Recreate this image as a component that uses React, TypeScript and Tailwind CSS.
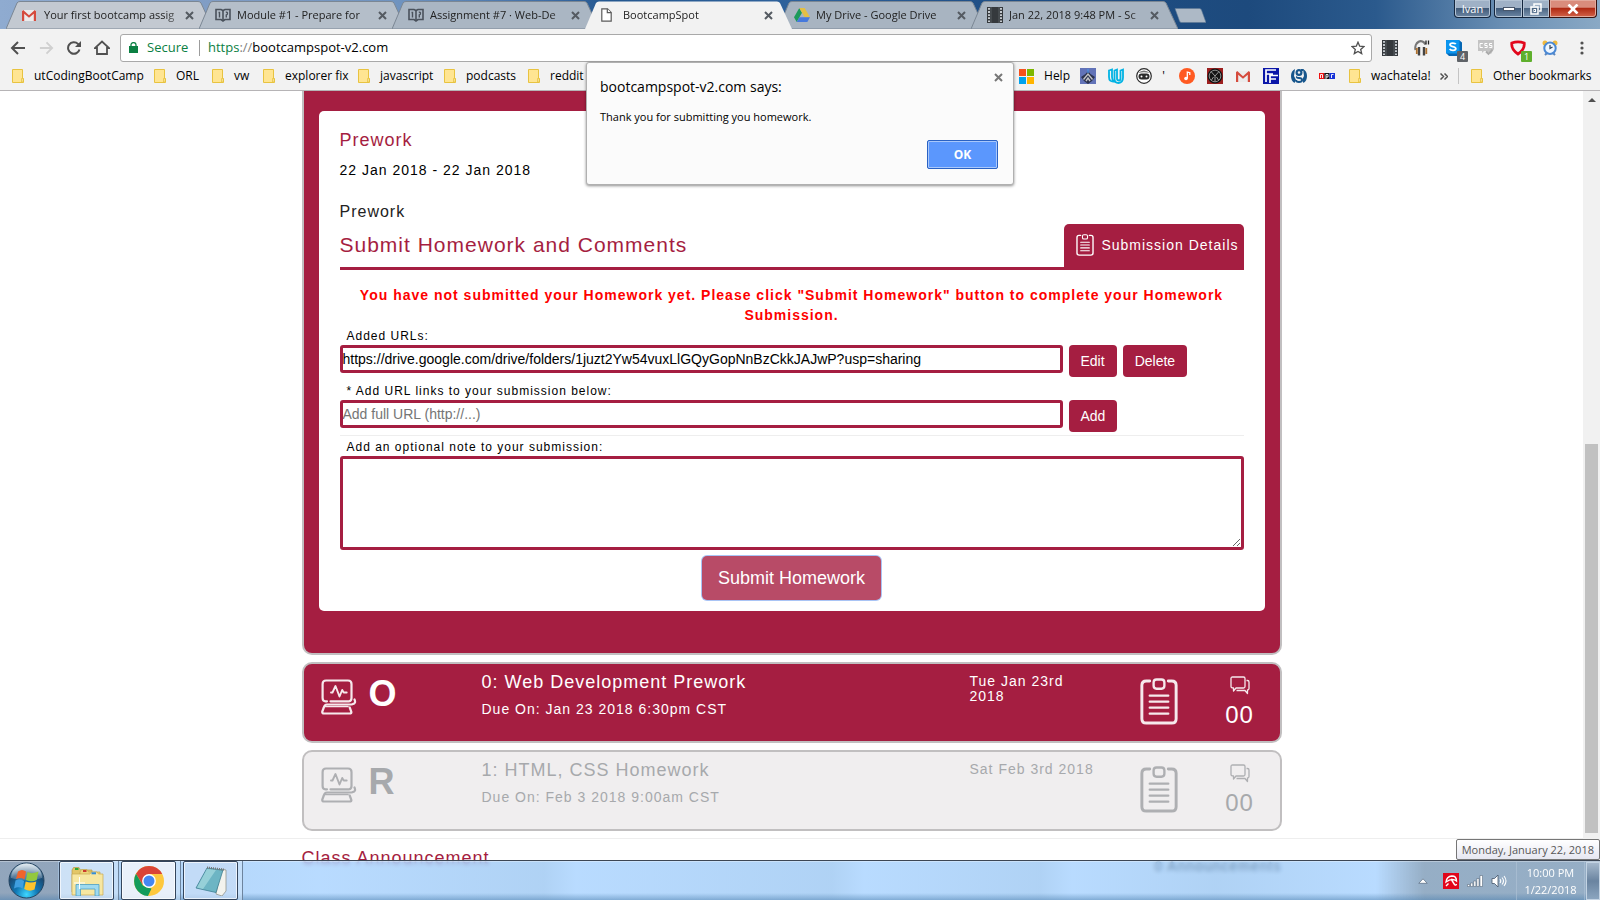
import React from "react";

/* ---------- browser icons ---------- */

function Gmail({ className }: { className: string }) {
  return (
    <svg className={className} viewBox="0 0 14 11" aria-hidden="true">
      <rect x="0" y="0" width="14" height="11" rx="1" fill="#ececec" />
      <path d="M0 11V1.2L1.2 0 7 5.2 12.8 0 14 1.2V11h-2.2V3.8L7 7.8 2.2 3.8V11z" fill="#d54b3d" />
    </svg>
  );
}

function Book({ className }: { className: string }) {
  return (
    <svg className={className} viewBox="0 0 16 14" fill="none" stroke="#4a525c" strokeWidth="1.6" aria-hidden="true">
      <path d="M1 1.5h5l2 1 2-1h5v10h-5l-2 1.500-2-1.500H1z" />
      <path d="M8 2.5V13" />
      <path d="M3.500 4.500h1v5" strokeWidth="1.400" />
      <path d="M11.300 9.500V7q1.500-.5 1.200-2-.3-1-1.700-.8" strokeWidth="1.400" />
    </svg>
  );
}

function PageIcon({ className }: { className: string }) {
  return (
    <svg className={className} viewBox="0 0 11 14" fill="#fff" stroke="#5a5a5a" strokeWidth="1.2" aria-hidden="true">
      <path d="M.8.8h5.700l3.700 3.700v8.700H.8z" />
      <path d="M6.300.8v3.900h3.900" />
    </svg>
  );
}

function DriveIcon({ className }: { className: string }) {
  return (
    <svg className={className} viewBox="0 0 16 14" aria-hidden="true">
      <path d="M5.300 0 0 9.200 2.700 14 8 4.700z" fill="#1c9a5b" />
      <path d="M5.300 0h5.400L16 9.200h-5.300z" fill="#e3bf45" />
      <path d="M5.400 9.200H16L13.300 14H2.700z" fill="#4679dc" />
    </svg>
  );
}

function Film({ className }: { className: string }) {
  return (
    <svg className={className} viewBox="0 0 16 16" aria-hidden="true">
      <rect width="16" height="16" fill="#35393d" />
      <path d="M2 1v14M14 1v14" stroke="#c4c9ce" strokeWidth="2" strokeDasharray="1.800 1.300" />
      <path d="M4 0v16M12 0v16" stroke="#6d7379" strokeWidth=".6" />
    </svg>
  );
}

function Cross({ className }: { className: string }) {
  return (
    <svg className={className} viewBox="0 0 9 9" stroke="currentColor" strokeWidth="2" aria-hidden="true">
      <path d="M1 1l7 7M8 1L1 8" />
    </svg>
  );
}

function Folder() {
  return (
    <svg className="h-[14px] w-3 shrink-0" viewBox="0 0 12 14" aria-hidden="true">
      <path d="M.5.5h10v9h1v4H.5z" fill="#ffe592" stroke="#e8c340" />
      <path d="M9.500 13V9.500h1.500V13z" fill="#fff2c4" stroke="#e8c340" strokeWidth=".8" />
    </svg>
  );
}

/* ---------- tabs ---------- */

const tabs = [
  { title: "Your first bootcamp assig", icon: <Gmail className="h-[11px] w-[14px]" />, fill: "#c3c9d1" },
  { title: "Module #1 - Prepare for", icon: <Book className="h-[14px] w-4" />, fill: "#b4bec9" },
  { title: "Assignment #7 · Web-De", icon: <Book className="h-[14px] w-4" />, fill: "#aab6c3" },
  { title: "BootcampSpot", icon: <PageIcon className="h-[14px] w-[11px]" />, fill: "#f2f2f2", active: true },
  { title: "My Drive - Google Drive", icon: <DriveIcon className="h-[14px] w-4" />, fill: "#a8b4c1" },
  { title: "Jan 22, 2018 9:48 PM - Sc", icon: <Film className="size-4" />, fill: "#a8b4c1" },
];

function TabStrip() {
  return (
    <header className="relative flex h-[29px] shrink-0 items-end overflow-hidden bg-[linear-gradient(90deg,#8fabd0_0%,#7f9cc4_14%,#6f93bf_25%,#3f6ea6_34%,#24578f_38%,#2f629c_50%,#1f4f86_62%,#1d4a7d_78%,#2b5a8d_86%,#6a8fb4_94%,#8aa9c5_100%)] pl-[6px]">
      {tabs.map((t) => (
        <div
          key={t.title}
          className={
            t.active
              ? "relative z-10 -mr-[14px] flex h-7 w-[207px] shrink-0 items-center pr-[19px] pl-4"
              : "relative -mr-[14px] flex h-7 w-[207px] shrink-0 items-center pr-[19px] pl-4"
          }
        >
          <svg className="absolute inset-0 h-full w-full" viewBox="0 0 207 28" preserveAspectRatio="none" aria-hidden="true">
            <path d="M0 28 L11 2 Q12 .5 14 .5 H192 Q194 .5 195 2 L207 28 z" fill={t.fill} stroke={t.active ? "none" : "#7b8794"} />
          </svg>
          <span className="relative flex w-[22px] shrink-0 justify-start">{t.icon}</span>
          <button className="relative min-w-0 flex-1 text-left text-[11px] leading-4 whitespace-nowrap text-[#222] [mask-image:linear-gradient(90deg,#000_88%,#0005)]">
            {t.title}
          </button>
          <button aria-label={"Close " + t.title} className="relative ml-1 text-[#555b62]">
            <Cross className="size-[9px]" />
          </button>
        </div>
      ))}
      <button aria-label="New tab" className="mb-[6px] ml-[10px] self-end">
        <svg className="h-[15px] w-8" viewBox="0 0 32 15" aria-hidden="true">
          <path d="M1 .5h24.500q1.500 0 2 1.500L32 14.500H7.500q-1.500 0-2-1.500z" fill="#adb9c6" stroke="#5e7896" strokeWidth=".6" />
        </svg>
      </button>
      <div className="ml-auto flex h-[19px] self-start pr-[3px] text-white">
        <button className="mr-[3px] h-[18px] w-[37px] rounded-b-[4px] border border-t-0 border-[#14263e] bg-[linear-gradient(#9fb1c6_0_45%,#415a78_50%,#6c86a3)] text-[11px] leading-4 shadow-[inset_0_0_0_1px_#b3c3d4]">
          Ivan
        </button>
        <button aria-label="Minimize" className="flex h-[18px] w-[29px] items-center justify-center rounded-bl-[4px] border border-t-0 border-[#14263e] bg-[linear-gradient(#9fb1c6_0_45%,#3f5a7a_50%,#6c86a3)] shadow-[inset_0_0_0_1px_#b3c3d4]">
          <svg className="h-1 w-3" viewBox="0 0 12 4"><rect x=".5" y=".5" width="11" height="3" fill="#fff" stroke="#475569" /></svg>
        </button>
        <button aria-label="Restore" className="flex h-[18px] w-[26px] items-center justify-center border-b border-[#14263e] bg-[linear-gradient(#9fb1c6_0_45%,#4d6784_50%,#7c95b0)] shadow-[inset_0_0_0_1px_#b3c3d4]">
          <svg className="size-3" viewBox="0 0 12 12" fill="none" stroke="#fff" strokeWidth="1.500"><path d="M4 3V1h7v7H9" /><rect x="1" y="4" width="7" height="7" /><rect x="4" y="6.500" width="1.500" height="2" strokeWidth="1" /></svg>
        </button>
        <button aria-label="Close window" className="flex h-[18px] w-[48px] items-center justify-center rounded-br-[4px] border border-t-0 border-[#3a1310] bg-[linear-gradient(#d98c7c_0_42%,#b02a14_50%,#d2634a)] shadow-[inset_0_0_0_1px_#e2a99c]">
          <svg className="h-[10px] w-3" viewBox="0 0 12 10" fill="none" stroke="#fff" strokeWidth="2.600"><path d="M1.500.5l9 9M10.500.5l-9 9" /></svg>
        </button>
      </div>
    </header>
  );
}

/* ---------- toolbar ---------- */

function Toolbar() {
  return (
    <div className="flex h-[33px] shrink-0 items-center bg-[#f2f2f2] pt-1 pr-[10px] pl-[10px]">
      <nav className="flex w-[110px] items-center gap-[13px] text-[#505050]">
        <button aria-label="Back">
          <svg className="h-[14px] w-4" viewBox="0 0 16 14" fill="none" stroke="currentColor" strokeWidth="2"><path d="M15 7H2M8 1L2 7l6 6" /></svg>
        </button>
        <button aria-label="Forward" className="text-[#d0d0d0]">
          <svg className="h-[14px] w-[15px]" viewBox="0 0 16 14" fill="none" stroke="currentColor" strokeWidth="2"><path d="M1 7h13M8 1l6 6-6 6" /></svg>
        </button>
        <button aria-label="Reload">
          <svg className="size-[14px]" viewBox="0 0 14 14" fill="none" stroke="currentColor" strokeWidth="2"><path d="M12.500 8.500A5.800 5.800 0 1 1 11 2.900L12.500 4.500" /><path d="M14 0v6H8z" fill="currentColor" stroke="none" /></svg>
        </button>
        <button aria-label="Home">
          <svg className="h-[15px] w-4" viewBox="0 0 16 15" fill="none" stroke="currentColor" strokeWidth="1.800"><path d="M3 14V8H1l7-6.500L15 8h-2v6z" /></svg>
        </button>
      </nav>
      <div className="flex h-7 min-w-0 flex-1 items-center rounded-[3px] border border-[#a9a9a9] bg-white pr-[6px] pl-2">
        <svg className="mr-[9px] h-[11px] w-[9px]" viewBox="0 0 9 11" aria-hidden="true"><path d="M0 4h9v7H0z" fill="#0b8043" /><path d="M2 4.500V2.800a2.500 2.200 0 0 1 5 0v1.700" fill="none" stroke="#0b8043" strokeWidth="1.300" /></svg>
        <span className="w-[52px] text-[13px] text-[#0b8043]">Secure</span>
        <span className="mr-2 h-4 w-px bg-[#9c9c9c]" />
        <a href="https://bootcampspot-v2.com" className="text-[13px] text-black">
          <span className="text-[#0b8043]">https</span>
          <span className="text-[#808080]">://</span>bootcampspot-v2.com
        </a>
        <button aria-label="Bookmark this page" className="ml-auto">
          <svg className="size-[14px]" viewBox="0 0 14 14" fill="none" stroke="#505050" strokeWidth="1.300"><path d="M7 1.200l1.700 4 4.300.4-3.300 2.800 1 4.200L7 10.400l-3.700 2.200 1-4.200L1 5.600l4.300-.4z" /></svg>
        </button>
      </div>
      <div className="flex items-center gap-4 pl-[10px]">
        <Film className="size-4" />
        <svg className="size-4" viewBox="0 0 16 16" fill="none" aria-label="Headphones">
          <path d="M1.500 10a5.500 7 0 0 1 10-5.500" stroke="#777" strokeWidth="2.200" />
          <path d="M5 7v8.500M10 7v8.500" stroke="#444" strokeWidth="2.400" />
          <path d="M2.800 8v6M12.300 8v6" stroke="#b0722f" strokeWidth="1.800" />
          <path d="M12 .5v4M14.500.5v4" stroke="#222" strokeWidth="1.300" />
        </svg>
        <span className="relative">
          <svg className="size-4" viewBox="0 0 16 16" aria-hidden="true"><path d="M0 0h13l3 2.500V16H3l-3-3z" fill="#0567b4" /><rect width="13.500" height="13.500" rx="1" fill="#0a95ef" /><path d="M9.800 4.200C9 2.700 4 2.500 4 4.800c0 2.200 5.800 1.300 5.800 3.700 0 2.500-5.200 2.200-6.100.4" fill="none" stroke="#fff" strokeWidth="1.800" /></svg>
          <span className="absolute top-[11px] left-[11px] h-[11px] w-[11px] rounded-[1px] bg-[#5f6368] text-center text-[9px] leading-[11px] text-white">4</span>
        </span>
        <svg className="size-4" viewBox="0 0 16 16" aria-hidden="true">
          <path d="M0 0h16v9l-3 5-4-2-1-1H6l-2 2V11H0z" fill="#c3c3c3" />
          <path d="M4.800 3.500H2v4h2.800M9.300 3.500H6.800v2h2.400v2H6.600M14 3.500h-2.500v2h2.400v2h-2.600" fill="none" stroke="#fff" />
          <path d="M8 11.500l2.500 2.500 4-4.500" fill="none" stroke="#aaa" strokeWidth="1.800" />
        </svg>
        <span className="relative">
          <svg className="size-4" viewBox="0 0 16 16" fill="none" aria-hidden="true"><path d="M1.800 3Q8 .8 14.200 3 15 9.500 8 14 1 9.500 1.800 3z" stroke="#e2071c" strokeWidth="2.800" /></svg>
          <span className="absolute top-[11px] left-[11px] h-[11px] w-[11px] rounded-[1px] bg-[#5fb02d] text-center text-[9px] leading-[11px] text-white">1</span>
        </span>
        <svg className="size-4" viewBox="0 0 16 16" fill="none" aria-label="Alarm clock">
          <circle cx="3" cy="3" r="2.500" fill="#efb93e" /><circle cx="13" cy="3" r="2.500" fill="#efb93e" />
          <path d="M3 15l2-2M13 15l-2-2" stroke="#5b86bd" strokeWidth="2" />
          <circle cx="8" cy="8.300" r="5.700" fill="#eef6ff" stroke="#4b89d4" strokeWidth="2" />
          <path d="M8 5v3.500l2.500-1.500" stroke="#345" strokeWidth="1.200" />
        </svg>
        <button aria-label="Menu" className="w-4">
          <svg className="mx-auto h-[14px] w-1" viewBox="0 0 4 14" fill="#505050"><circle cx="2" cy="2" r="1.600" /><circle cx="2" cy="7" r="1.600" /><circle cx="2" cy="12" r="1.600" /></svg>
        </button>
      </div>
    </div>
  );
}

/* ---------- bookmarks ---------- */

const folders = [
  { label: "utCodingBootCamp", width: "w-[142px]" },
  { label: "ORL", width: "w-[58px]" },
  { label: "vw", width: "w-[51px]" },
  { label: "explorer fix", width: "w-[95px]" },
  { label: "javascript", width: "w-[86px]" },
  { label: "podcasts", width: "w-[84px]" },
];

function Bookmarks() {
  return (
    <nav className="flex h-[29px] shrink-0 items-center border-b border-[#b6b4b6] bg-[#f2f2f2] pr-3 pl-3 text-[12px] leading-4 whitespace-nowrap text-black">
      {folders.map((f) => (
        <button key={f.label} className={`${f.width} flex shrink-0 items-center gap-[10px] text-left`}>
          <Folder />
          {f.label}
        </button>
      ))}
      <button className="flex min-w-0 flex-1 items-center gap-[10px] overflow-hidden text-left">
        <Folder />
        reddit b
      </button>
      <div className="flex items-center gap-3">
        <a href="#help" className="-mr-[2px] flex items-center gap-[10px]">
          <svg className="size-[15px]" viewBox="0 0 15 15" aria-hidden="true"><path d="M0 0h7v7H0z" fill="#f6511d" /><path d="M8 0h7v7H8z" fill="#7db700" /><path d="M0 8h7v7H0z" fill="#00a2ed" /><path d="M8 8h7v7H8z" fill="#ffb400" /></svg>
          Help
        </a>
        <svg className="size-4" viewBox="0 0 16 16" aria-hidden="true"><rect width="16" height="16" fill="#6273b8" /><path d="M8 3l2.500 3L15 9l-3 4-4 3-4-3-3-4 4.500-3z" fill="#2c3450" /><path d="M3.500 11.500L8 6l4.500 5.500M6 13l2-3 2 3" fill="none" stroke="#c3c3c6" strokeWidth="1.400" /><path d="M7.300 1h1.400v4H7.300z" fill="#4a8fe0" /></svg>
        <svg className="size-4" viewBox="0 0 16 16" fill="none" stroke="#02b3e4" strokeWidth="1.800" aria-hidden="true"><path d="M1 2.500l3-1v7.500q0 3 2 4.500Q1 14 1 9z" /><path d="M6.500 2.500l2.500-1v9q0 2 2 2 1.500 0 1.500-2V2.500l2.500-1v8q0 5-4.500 5.500-4 0-4-4z" /></svg>
        <svg className="size-4" viewBox="0 0 16 16" aria-hidden="true"><circle cx="8" cy="8" r="7.300" fill="#fff" stroke="#2c2c2c" strokeWidth="1.200" /><path d="M2 5q6-5 12 0-6-1.500-12 0z" fill="#777" /><rect x="2.500" y="5.500" width="11" height="6" rx="3" fill="#2c2c2c" /><circle cx="5.500" cy="8.500" r="1" fill="#fff" /><circle cx="10.500" cy="8.500" r="1" fill="#fff" /></svg>
        <span className="-mx-1 w-[7px] text-center">'</span>
        <svg className="ml-1 size-4" viewBox="0 0 16 16" aria-hidden="true"><circle cx="8" cy="8" r="8" fill="#ff5a22" /><circle cx="7" cy="10.500" r="1.800" fill="#fff" /><path d="M8.300 10.500V4l2.500.7V7" fill="none" stroke="#fff" strokeWidth="1.300" /></svg>
        <svg className="size-4" viewBox="0 0 16 16" aria-hidden="true"><rect width="16" height="16" fill="#9d1f1f" /><circle cx="8" cy="8" r="7.500" fill="#141414" /><circle cx="8" cy="8" r="5.800" fill="none" stroke="#888" /><path d="M4 3.500l4 4.500 4-4.500M8 8v5.500M4.500 12l2-3M11.500 12l-2-3" fill="none" stroke="#999" /></svg>
        <span className="flex w-4 justify-center"><Gmail className="h-[11px] w-[14px]" /></span>
        <svg className="size-4" viewBox="0 0 16 16" aria-hidden="true"><rect width="16" height="16" fill="#0b16a8" /><path d="M3 14V2h10M3 6h7M7 15V7.500h8M7 11h6" fill="none" stroke="#fff" strokeWidth="1.700" /></svg>
        <svg className="size-4" viewBox="0 0 16 16" aria-hidden="true"><path d="M4 1Q0 3 0 8t3.500 7L5 12 3 8zM12 1q4 2 4 7t-3.500 7L11 12l2-4z" fill="#17568c" /><circle cx="8" cy="4.500" r="2.400" fill="none" stroke="#17568c" strokeWidth="2.200" /><path d="M10 2h2.500M6 8.500q-1 1.500 2 1.500t3 2-3 2-3-2" fill="none" stroke="#17568c" strokeWidth="1.800" /></svg>
        <svg className="h-[6px] w-4" viewBox="0 0 16 6" aria-hidden="true"><path d="M0 0h5.300v6H0z" fill="#e11" /><path d="M5.300 0h5.300v6H5.300z" fill="#111" /><path d="M10.600 0H16v6h-5.400z" fill="#1732d8" /><path d="M1.500 5V1.500h2V5M7 6V1.500h2V4H7M12.500 5V1.500h2" fill="none" stroke="#fff" strokeWidth=".9" /></svg>
      </div>
      <button className="ml-[14px] flex w-[91px] items-center gap-[10px] text-left"><Folder />wachatela!</button>
      <button aria-label="More bookmarks" className="w-[18px]">
        <svg className="h-[7px] w-2" viewBox="0 0 8 7" fill="none" stroke="#505050" strokeWidth="1.500"><path d="M.5.5l3 3-3 3M4.500.5l3 3-3 3" /></svg>
      </button>
      <span className="mr-3 h-4 w-px bg-[#c4c4c4]" />
      <button className="flex w-[117px] items-center gap-[10px] text-left"><Folder />Other bookmarks</button>
    </nav>
  );
}

function AlertDialog() {
  return (
    <div role="alertdialog" aria-labelledby="alert-title" className="absolute top-[62px] left-1/2 z-30 -ml-[214px] flex h-[123px] w-[428px] flex-col rounded-[3px] border border-[#b0b0b0] bg-[#fbfbfb] pt-3 pr-[15px] pl-[13px] text-black shadow-[0_1px_3px_rgba(0,0,0,0.45)]">
      <div className="flex items-start justify-between">
        <h2 id="alert-title" className="text-[14px] leading-6">bootcampspot-v2.com says:</h2>
        <button aria-label="Close" className="-mt-1 -mr-[7px] p-[2px] text-[#777]"><Cross className="size-[9px]" /></button>
      </div>
      <p className="mt-[10px] text-[11px] leading-4">Thank you for submitting you homework.</p>
      <button className="mt-[15px] h-[29px] w-[71px] self-end rounded-[2px] border border-[#2a62c4] bg-[#5b97fd] text-[12px] leading-4 font-bold text-white shadow-[inset_0_0_0_1px_#a9c8fb]">OK</button>
    </div>
  );
}

/* ---------- page icons ---------- */

function Clipboard({ className }: { className: string }) {
  return (
    <svg className={className} viewBox="0 0 38 48" fill="none" stroke="currentColor" strokeLinecap="round" aria-hidden="true">
      <path d="M9.500 3H6Q1.500 3 1.500 7.500v34Q1.500 46 6 46h26q4.500 0 4.500-4.500v-34Q36.500 3 32 3h-3.500" strokeWidth="3" />
      <rect x="13.500" y="1.500" width="11" height="9.500" rx="3" strokeWidth="2.400" />
      <path d="M9.500 18h19M9.500 24.200h19M9.500 30.300h19M9.500 36.500h19" strokeWidth="2.300" />
    </svg>
  );
}

function Laptop() {
  return (
    <svg className="h-9 w-9 shrink-0 opacity-90" viewBox="0 0 36 36" fill="none" stroke="currentColor" strokeWidth="2.200" strokeLinecap="round" strokeLinejoin="round" aria-hidden="true">
      <path d="M6 22.300H4.500Q1.600 22.300 1.600 19V5Q1.600 1.500 5 1.500h22Q30.500 1.500 30.500 5v14q0 3-2.500 3.300H9.500" />
      <path d="M10 13.500h1.500L14.500 7l4 10.500 2.700-6.500 1.500 2.500h3" strokeWidth="1.900" />
      <path d="M33.500 20.500q1.800 4-2 4.700-1 .3-3 .3H6Q3.500 25.500 2.800 28.500L1.300 32.500q-.4 2 1.700 2h25.500q2.500 0 1.700-2l-1.500-4" />
      <path d="M4 27.500h23" strokeWidth="1.600" />
    </svg>
  );
}

function Chat() {
  return (
    <svg className="h-[19px] w-5 opacity-90" viewBox="0 0 20 19" fill="none" stroke="currentColor" strokeWidth="1.300" strokeLinejoin="round" aria-hidden="true">
      <path d="M2.500 1h11Q15 1 15 2.500v8q0 1.500-1.500 1.500H6l-2.500 3V12Q1 12 1 10.500v-8Q1 1 2.500 1z" />
      <path d="M16.500 4.500h1q1.500 0 1.500 1.500v6.500q0 1.500-1.500 1.500v3.500L15 14.500H6.500" />
    </svg>
  );
}

function HomeworkRow({ open, letter, title, due, date }: { open?: boolean; letter: string; title: string; due: string; date: string }) {
  return (
    <article
      className={
        open
          ? "mt-[7px] flex h-[81px] rounded-[10px] border-2 border-[#c1bfc0] bg-[#a51e41] pl-[17px] text-white"
          : "mt-[7px] flex h-[81px] rounded-[10px] border-2 border-[#c1bfc0] bg-[#f0eeef] pl-[17px] text-[#a7a9ac]"
      }
    >
      <div className="flex w-[161px] shrink-0 items-start gap-3 pt-[10px]">
        <span className="pt-[5px]"><Laptop /></span>
        <span className="text-[36px] leading-[40px] font-bold">{letter}</span>
      </div>
      <div className="min-w-0 flex-1 pt-[6px]">
        <h3 className="text-[18px] leading-6">{title}</h3>
        <p className="mt-[5px] text-[14px] leading-5">{due}</p>
      </div>
      <p className="w-[130px] shrink-0 pt-[10px] text-[14px] leading-[15px]">{date}</p>
      <div className="flex w-[118px] shrink-0 justify-center pt-[14px] opacity-90"><Clipboard className="h-[47px] w-[38px]" /></div>
      <div className="flex w-[62px] shrink-0 flex-col items-start pt-3">
        <span className="flex w-11 flex-col items-center">
          <Chat />
          <span className="mt-2 text-[24px] leading-[24px]">00</span>
        </span>
      </div>
    </article>
  );
}

const field = "h-7 w-[723px] rounded-[3px] border-3 border-[#a51e41] bg-white text-[14px] text-black outline-none placeholder:text-[#757575]";
const smallButton = "h-8 rounded-[4px] bg-[#a51e41] px-3 text-[14px] leading-5 text-white";
const fieldLabel = "block pt-[2px] pl-[7px] text-[12px] leading-[18px] tracking-[1px] text-black";

function HomeworkForm() {
  return (
    <section className="rounded-b-[10px] border-x-2 border-b-2 border-[#c1bfc0] bg-[#a51e41] px-[15px] pt-5 pb-[42px]">
      <div className="rounded-[5px] bg-white px-[21px] pt-[19px] pb-[11px]">
        <h2 className="text-[18px] leading-5 tracking-[1px] text-[#a51e41]">Prework</h2>
        <p className="mt-[10px] text-[14px] leading-5 tracking-[1px] text-black">22 Jan 2018 - 22 Jan 2018</p>
        <p className="mt-[22px] text-[16px] leading-5 tracking-[1px] text-[#222]">Prework</p>
        <div className="mt-[2px] flex h-[46px] justify-between border-b-3 border-[#a51e41]">
          <h1 className="pt-[9px] text-[21px] leading-6 tracking-[1px] text-[#a51e41]">Submit Homework and Comments</h1>
          <button className="flex items-center gap-[7px] rounded-t-[5px] bg-[#a51e41] pr-[5px] pb-[2px] pl-3 text-[14px] leading-5 tracking-[1px] text-white">
            <Clipboard className="h-[22px] w-[18px]" />
            Submission Details
          </button>
        </div>
        <p className="mt-[15px] text-center text-[14px] leading-5 font-bold tracking-[1px] text-[#f00]">
          You have not submitted your Homework yet. Please click "Submit Homework" button to complete your Homework Submission.
        </p>
        <label htmlFor="added-url" className={fieldLabel}>Added URLs:</label>
        <div className="flex gap-[6px]">
          <input id="added-url" className={field} defaultValue="https://drive.google.com/drive/folders/1juzt2Yw54vuxLlGQyGopNnBzCkkJAJwP?usp=sharing" />
          <button className={smallButton}>Edit</button>
          <button className={smallButton}>Delete</button>
        </div>
        <label htmlFor="new-url" className={"mt-[3px] " + fieldLabel}>* Add URL links to your submission below:</label>
        <div className="flex gap-[6px]">
          <input id="new-url" className={field} placeholder="Add full URL (http://...)" />
          <button className={smallButton}>Add</button>
        </div>
        <hr className="mt-[3px] border-[#eee]" />
        <label htmlFor="note" className={fieldLabel}>Add an optional note to your submission:</label>
        <textarea id="note" className="block h-[94px] w-full resize rounded-[3px] border-3 border-[#a51e41] bg-white outline-none" />
        <div className="mt-[6px] flex justify-center">
          <button className="h-11 rounded-[5px] bg-[#b84b67] px-4 text-[18px] leading-6 text-white shadow-[0_0_0_1px_#a9c4f5]">Submit Homework</button>
        </div>
      </div>
    </section>
  );
}

/* ---------- taskbar ---------- */

function Taskbar() {
  const item = "flex h-[39px] w-[55px] items-center justify-center rounded-[2px] border border-[#34455c] shadow-[inset_0_0_0_1px_#ffffffb0]";
  return (
    <footer className="absolute inset-x-0 bottom-0 z-20 flex h-10 items-center border-t border-[#3c4654] bg-[linear-gradient(180deg,#ffffff50_0_1px,transparent_1px_32px,#4b7fae80_100%),linear-gradient(90deg,#8ba0b8f0_0_58px,#8cbef0b0_59px,#99cbffb0_20%,#8cbef0b0_34%,#99cbffb0_36%,#8cbef0b0_52%,#99cbffb0_54%,#8cbef0b0_65%,#99cbffb0_67%,#8cbef0b0_76%,#99cbffb0_86%,#8fa9c2f0_89%)] backdrop-blur-[2px]">
      <button aria-label="Start" className="ml-2 w-[51px]">
        <svg className="h-[37px] w-[37px]" viewBox="0 0 37 37" aria-hidden="true">
          <defs>
            <radialGradient id="orb" cx=".5" cy=".9" r=".9"><stop offset="0" stopColor="#3fd7ff" /><stop offset=".35" stopColor="#1178b5" /><stop offset=".7" stopColor="#1a4a73" /><stop offset="1" stopColor="#8fb3cc" /></radialGradient>
            <linearGradient id="gloss" x2="0" y2="1"><stop offset="0" stopColor="#fff" stopOpacity=".75" /><stop offset="1" stopColor="#fff" stopOpacity=".15" /></linearGradient>
          </defs>
          <circle cx="18.500" cy="18.500" r="17.500" fill="url(#orb)" stroke="#24435f" />
          <path d="M3 16a15.500 14.500 0 0 1 31 0q-15 5-31 0z" fill="url(#gloss)" />
          <path d="M10 9.500q4-3 8 0l-1.500 8q-4-2.500-8.500-.5z" fill="#f0642b" />
          <path d="M19.500 10q4 2.500 11-.5l-1.800 8.500q-5 2.500-10.700 0z" fill="#93c83e" />
          <path d="M7.500 18.500q4-2 8.600.5l-1.500 7.500q-4-2.500-8.600 0z" fill="#3f9fe0" />
          <path d="M17.700 19.500q5 2 10.600 0l-1.800 8q-5 2.500-10.300-.5z" fill="#fcc32c" />
        </svg>
      </button>
      <button aria-label="File Explorer" className={`${item} bg-[#dbe9f8b0]`}>
        <svg className="h-[30px] w-[34px]" viewBox="0 0 34 30" aria-hidden="true">
          <path d="M2 4l1.500-2.500H9L10.500 4H22V26H2z" fill="#e3c667" stroke="#b79a45" strokeWidth=".7" />
          <path d="M10 6l1.500-2.500H17L18.500 6H30v20H10z" fill="#eed67c" stroke="#c4a850" strokeWidth=".7" />
          <path d="M2 8h18l1.500-2H27l1.500 2H33v21H2z" fill="#f7e7a1" stroke="#c7aa50" strokeWidth=".7" />
          <path d="M5 2h3.500v2H5z" fill="#2ca836" /><path d="M13 4h3.500v2H13z" fill="#cc3a2d" /><path d="M21.500 6.300H26v2h-4.500z" fill="#338cd9" />
          <path d="M6 30V18.500h23V30h-4v-7H10.500v7z" fill="#9fdaf0" stroke="#4b9ec4" strokeWidth=".8" />
          <path d="M9.500 11v12M4 17h11" stroke="#fff" />
        </svg>
      </button>
      <span className="mr-[2px] h-[39px] w-[5px] border-r border-[#6d849e] bg-[#d6e7f980]" />
      <button aria-label="Chrome" className={`${item} bg-[#f1f5fbe0]`}>
        <svg className="size-[30px]" viewBox="0 0 30 30" aria-hidden="true">
          <circle cx="15" cy="15" r="15" fill="#fdc83e" />
          <path d="M15 0A15 15 0 0 1 28.200 8H15L8.500 18.500 2 7.700A15 15 0 0 1 15 0z" fill="#da4437" />
          <path d="M2 7.700L8.900 19.500 15 22l2.500.5L14 30A15 15 0 0 1 2 7.700z" fill="#129b5c" />
          <circle cx="15" cy="15" r="6.900" fill="#fff" /><circle cx="15" cy="15" r="5.500" fill="#4387f2" />
        </svg>
      </button>
      <span className="mr-[2px] h-[39px] w-[5px] border-r border-[#6d849e] bg-[#d6e7f980]" />
      <button aria-label="Notepad" className={`${item} bg-[#c9def6b0]`}>
        <svg className="h-[30px] w-[34px]" viewBox="0 0 34 30" aria-hidden="true">
          <path d="M27 3l5 1v21l-4 5-6-2z" fill="#f3f3ee" stroke="#8b8b80" strokeWidth=".7" />
          <path d="M13 2l16 2-7 22.500L2 22z" fill="#6db5c4" stroke="#3f7f92" strokeWidth=".8" />
          <path d="M13 3l9 1L9 23l-6-1.500z" fill="#a8dbe1" opacity=".7" />
          <path d="M13 1.500l17 2.200" stroke="#777" strokeWidth="2.200" strokeDasharray="1 1" />
        </svg>
      </button>
      <span className="h-[39px] w-[5px] border-r border-[#6d849e] bg-[#d6e7f980]" />
      <div className="ml-auto flex h-full items-center text-white">
        <svg className="mr-[15px] h-[6px] w-[10px]" viewBox="0 0 10 6" aria-hidden="true"><path d="M5 .8L9.200 5.300H.8z" fill="#fff" stroke="#53677e" strokeWidth=".7" /></svg>
        <svg className="mr-2 size-4" viewBox="0 0 16 16" aria-hidden="true"><rect width="16" height="16" fill="#e2061a" /><path d="M3 9Q3.500 3.500 9 3q4.500 0 4.500 5Q9 4.500 3 9zM8 6l3.500 5.500q1.500 1.500 2-.5M5.500 10.500L3 13" fill="none" stroke="#fff" strokeWidth="1.400" /></svg>
        <svg className="mr-2 h-3 w-4" viewBox="0 0 16 12" aria-hidden="true"><path d="M.5 9.500h2.200v2H.5zM3.600 8h2.200v3.500H3.600zM6.700 6h2.200v5.500H6.700zM9.800 3.500H12v8H9.800zM13 .5h2.500v11H13z" fill="#fff" stroke="#44566b" strokeWidth=".5" /></svg>
        <svg className="mr-[9px] h-[14px] w-4" viewBox="0 0 16 14" aria-hidden="true"><path d="M1 4.500h2.500L7 1v12L3.500 9.500H1z" fill="#fff" stroke="#44566b" strokeWidth=".8" /><path d="M9 5q1.500 2 0 4M11 3.500q3 3.500 0 7M13 2q4 5 0 10" fill="none" stroke="#fff" strokeWidth="1.100" /></svg>
        <div className="flex h-full w-[69px] flex-col justify-center border-x border-[#b7c9dc80] text-center text-[11px] leading-[17px]">
          <span>10:00 PM</span>
          <span>1/22/2018</span>
        </div>
        <button aria-label="Show desktop" className="ml-[1px] h-[38px] w-[14px] border border-[#c3d3e3] bg-[linear-gradient(#a5b8cc,#6a84a0_50%,#8ba5bf)]" />
      </div>
    </footer>
  );
}

export default function App() {
  return (
    <div className="relative flex h-screen flex-col overflow-hidden bg-white font-['Open_Sans','Noto_Sans',sans-serif]">
      <TabStrip />
      <Toolbar />
      <Bookmarks />
      <AlertDialog />
      <div className="flex min-h-0 flex-1">
        <main className="min-w-0 flex-1 overflow-hidden font-['Liberation_Sans',Arial,sans-serif]">
          <div className="mx-auto w-full max-w-[980px]">
            <HomeworkForm />
            <div className="tracking-[1px]">
              <HomeworkRow open letter="O" title="0: Web Development Prework" due="Due On: Jan 23 2018 6:30pm CST" date="Tue Jan 23rd 2018" />
              <HomeworkRow letter="R" title="1: HTML, CSS Homework" due="Due On: Feb 3 2018 9:00am CST" date="Sat Feb 3rd 2018" />
            </div>
          </div>
          <hr className="mt-[7px] border-[#eee]" />
          <div className="mx-auto flex w-full max-w-[980px] justify-between pt-[9px] tracking-[1px]">
            <h2 className="text-[18px] leading-5 text-[#a51e41]">Class Announcement</h2>
            <p className="pt-2 text-[14px] leading-5 text-[#222]">0 Announcements</p>
          </div>
        </main>
        <div className="flex w-[17px] shrink-0 flex-col items-center bg-[#f1f1f1] pt-[7px]" aria-hidden="true">
          <svg className="h-1 w-2" viewBox="0 0 8 4"><path d="M4 0l4 4H0z" fill="#505050" /></svg>
          <div className="mt-[342px] h-[389px] w-[13px] bg-[#c1c1c1]" />
        </div>
      </div>
      <div role="tooltip" className="absolute right-0 bottom-10 z-30 h-[21px] rounded-[2px] border border-[#767676] bg-[linear-gradient(#fff,#e6e7f1)] px-[5px] text-[11px] leading-[19px] whitespace-nowrap text-[#575757]">
        Monday, January 22, 2018
      </div>
      <Taskbar />
    </div>
  );
}
